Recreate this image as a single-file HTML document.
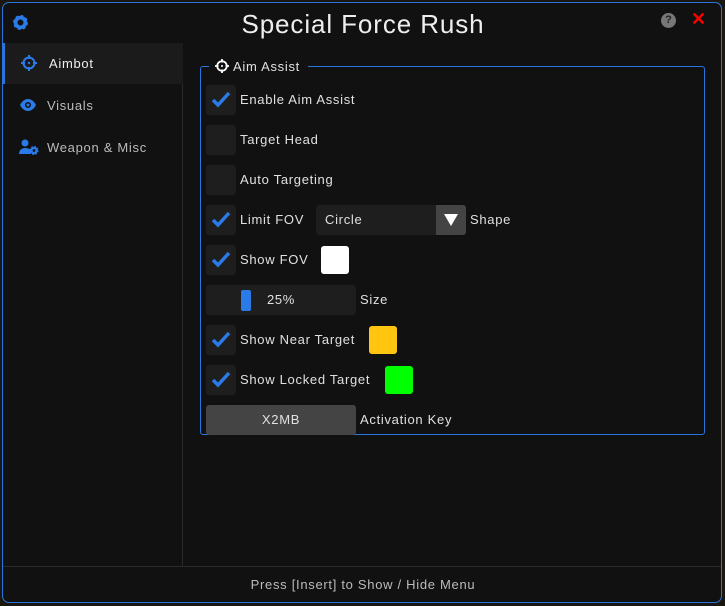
<!DOCTYPE html>
<html><head><meta charset="utf-8"><style>
*{margin:0;padding:0;box-sizing:border-box}
body{width:725px;height:606px;background:#1a1710;position:relative;overflow:hidden;font-family:"Liberation Sans",sans-serif;color:#e0e0e0;font-size:13px;letter-spacing:.7px}
.win{position:absolute;left:2px;top:2px;width:720px;height:601px;background:#111;border:1px solid #2a75dd;border-radius:7px;overflow:hidden}
.abs{position:absolute}
.title{left:0;width:720px;top:6px;text-align:center;font-size:26px;color:#eee;letter-spacing:.9px}
.side{left:0;top:40px;width:180px;height:523px;border-right:1px solid #2a2a2a}
.foot{left:0;top:563px;width:720px;border-top:1px solid #2a2a2a;height:40px;text-align:center;padding-top:10px;color:#bbb;font-size:13px}
.nav{position:absolute;left:0;width:180px;height:41px;line-height:41px;padding-left:44px;color:#bbb}
.nav.sel{background:#1b1b1b;color:#eee;border-left:2px solid #2a75dd}
.nav svg{position:absolute;left:16px;top:12px}
.grp{left:197px;top:63px;width:505px;height:369px;border:1px solid #2a75dd;border-radius:3px}
.legend{left:206px;top:54px;background:#111;padding:0 8px 0 6px;height:20px;line-height:20px;font-size:13px}
.cb{position:absolute;left:203px;width:30px;height:30px;background:#1e1e1e;border-radius:3px}
.cb svg{position:absolute;left:5px;top:6px}
.lbl{position:absolute;line-height:30px}
.box{position:absolute;background:#1e1e1e;border-radius:3px;height:30px;line-height:30px}
.sw{position:absolute;width:28px;height:28px;border-radius:3px}
</style></head><body>
<div class="win">
<svg class="abs" style="left:10px;top:12px" width="15" height="15" viewBox="0 0 16 16"><circle cx="8" cy="8" r="5.2" fill="none" stroke="#2a7be8" stroke-width="4"/><circle cx="8" cy="8" r="6.5" fill="none" stroke="#2a7be8" stroke-width="3" stroke-dasharray="2.6 2.5"/></svg>
<div class="abs title">Special Force Rush</div>
<div class="abs" style="left:658px;top:10px;width:15px;height:15px;border-radius:50%;background:#777;color:#222;font-size:11px;font-weight:bold;text-align:center;line-height:15px;letter-spacing:0">?</div>
<div class="abs" style="left:688px;top:6px;color:#f00;font-size:18px;font-weight:bold">✕</div>
<div class="abs side">
<div class="nav sel" style="top:0"><svg width="16" height="16" viewBox="0 0 16 16"><circle cx="8" cy="8" r="5.5" fill="none" stroke="#2a7be8" stroke-width="2"/><path d="M8 0v4M8 12v4M0 8h4M12 8h4" stroke="#2a7be8" stroke-width="2"/><circle cx="8" cy="8" r="1.2" fill="#2a7be8"/></svg>Aimbot</div>
<div class="nav" style="top:42px"><svg width="18" height="16" viewBox="0 0 18 16"><path d="M1 8C3 4 6 2 9 2s6 2 8 6c-2 4-5 6-8 6S3 12 1 8z" fill="#2a7be8"/><circle cx="9" cy="8" r="3" fill="#111"/><circle cx="9" cy="8" r="1.5" fill="#2a7be8"/></svg>Visuals</div>
<div class="nav" style="top:84px"><svg width="20" height="16" viewBox="0 0 20 16"><circle cx="6" cy="4" r="3.5" fill="#2a7be8"/><path d="M0 15c0-4 3-6 6-6s5 1 6 3v3z" fill="#2a7be8"/><circle cx="15" cy="11.5" r="2.6" fill="none" stroke="#2a7be8" stroke-width="2.4"/><circle cx="15" cy="11.5" r="3.8" fill="none" stroke="#2a7be8" stroke-width="1.6" stroke-dasharray="1.6 1.4"/></svg>Weapon &amp; Misc</div>
</div>
<div class="abs grp"></div>
<div class="abs legend"><svg style="vertical-align:-2px;margin-right:4px" width="14" height="14" viewBox="0 0 16 16"><circle cx="8" cy="8" r="5.5" fill="none" stroke="#fff" stroke-width="2"/><path d="M8 0v4M8 12v4M0 8h4M12 8h4" stroke="#fff" stroke-width="2"/><circle cx="8" cy="8" r="1.2" fill="#fff"/></svg>Aim Assist</div>

<div class="cb" style="top:82px"><svg width="20" height="18" viewBox="0 0 20 18"><path d="M2 9l5 5L18 2" fill="none" stroke="#2a7be8" stroke-width="3.5"/></svg></div>
<div class="lbl" style="left:237px;top:82px">Enable Aim Assist</div>
<div class="cb" style="top:122px"></div>
<div class="lbl" style="left:237px;top:122px">Target Head</div>
<div class="cb" style="top:162px"></div>
<div class="lbl" style="left:237px;top:162px">Auto Targeting</div>
<div class="cb" style="top:202px"><svg width="20" height="18" viewBox="0 0 20 18"><path d="M2 9l5 5L18 2" fill="none" stroke="#2a7be8" stroke-width="3.5"/></svg></div>
<div class="lbl" style="left:237px;top:202px">Limit FOV</div>
<div class="box" style="left:313px;top:202px;width:150px;padding-left:9px">Circle<div style="position:absolute;right:0;top:0;width:30px;height:30px;background:#444;border-radius:0 3px 3px 0"><svg style="position:absolute;left:8px;top:9px" width="14" height="12" viewBox="0 0 14 12"><path d="M0 0h14L7 12z" fill="#fff"/></svg></div></div>
<div class="lbl" style="left:467px;top:202px">Shape</div>
<div class="cb" style="top:242px"><svg width="20" height="18" viewBox="0 0 20 18"><path d="M2 9l5 5L18 2" fill="none" stroke="#2a7be8" stroke-width="3.5"/></svg></div>
<div class="lbl" style="left:237px;top:242px">Show FOV</div>
<div class="sw" style="left:318px;top:243px;background:#fff"></div>
<div class="box" style="left:203px;top:282px;width:150px;text-align:center">25%<div style="position:absolute;left:35px;top:5px;width:10px;height:21px;background:#2a7be8;border-radius:2px"></div></div>
<div class="lbl" style="left:357px;top:282px">Size</div>
<div class="cb" style="top:322px"><svg width="20" height="18" viewBox="0 0 20 18"><path d="M2 9l5 5L18 2" fill="none" stroke="#2a7be8" stroke-width="3.5"/></svg></div>
<div class="lbl" style="left:237px;top:322px">Show Near Target</div>
<div class="sw" style="left:366px;top:323px;background:#ffc50f"></div>
<div class="cb" style="top:362px"><svg width="20" height="18" viewBox="0 0 20 18"><path d="M2 9l5 5L18 2" fill="none" stroke="#2a7be8" stroke-width="3.5"/></svg></div>
<div class="lbl" style="left:237px;top:362px">Show Locked Target</div>
<div class="sw" style="left:382px;top:363px;background:#0f0"></div>
<div class="box" style="left:203px;top:402px;width:150px;text-align:center;background:#444">X2MB</div>
<div class="lbl" style="left:357px;top:402px">Activation Key</div>
<div class="abs foot">Press [Insert] to Show / Hide Menu</div>
</div>
</body></html>
